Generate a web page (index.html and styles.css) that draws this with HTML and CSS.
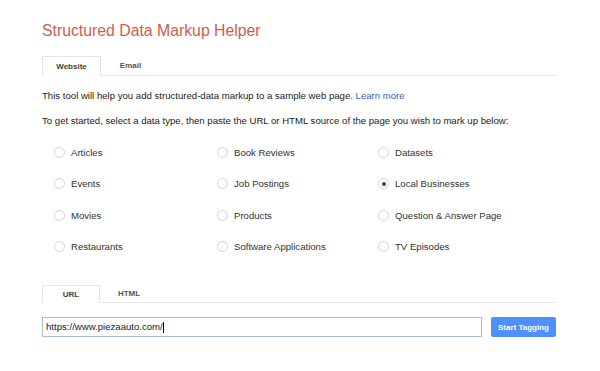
FILE: index.html
```html
<!DOCTYPE html>
<html lang="en">
<head>
    <meta charset="UTF-8">
    <title>Structured Data Markup Helper</title>
    <link rel="stylesheet" href="styles.css">
</head>
<body>
    <div class="helper">
        <h1>Structured Data Markup Helper</h1>

        <div class="tabs">
            <span class="tab active">Website</span>
            <span class="tab">Email</span>
        </div>

        <p class="intro">This tool will help you add structured-data markup to a sample web page. <a href="#">Learn more</a></p>
        <p class="intro">To get started, select a data type, then paste the URL or HTML source of the page you wish to mark up below:</p>

        <div class="types">
            <label class="type"><span class="radio"></span>Articles</label>
            <label class="type"><span class="radio"></span>Book Reviews</label>
            <label class="type"><span class="radio"></span>Datasets</label>
            <label class="type"><span class="radio"></span>Events</label>
            <label class="type"><span class="radio"></span>Job Postings</label>
            <label class="type"><span class="radio checked"></span>Local Businesses</label>
            <label class="type"><span class="radio"></span>Movies</label>
            <label class="type"><span class="radio"></span>Products</label>
            <label class="type"><span class="radio"></span>Question &amp; Answer Page</label>
            <label class="type"><span class="radio"></span>Restaurants</label>
            <label class="type"><span class="radio"></span>Software Applications</label>
            <label class="type"><span class="radio"></span>TV Episodes</label>
        </div>

        <div class="tabs source-tabs">
            <span class="tab active">URL</span>
            <span class="tab">HTML</span>
        </div>

        <div class="url-row">
            <div class="url-input">https://www.piezaauto.com/<span class="caret"></span></div>
            <button class="start-btn">Start Tagging</button>
        </div>
    </div>
</body>
</html>
```

FILE: styles.css
```css
* {
    margin: 0;
    padding: 0;
    box-sizing: border-box;
}

body {
    font-family: "Liberation Sans", Arial, sans-serif;
    background: #ffffff;
    color: #222;
}

.helper {
    width: 514px;
    margin-left: 42px;
    padding-top: 22px;
}

.helper h1 {
    font-size: 15.8px;
    font-weight: normal;
    color: #d65a4a;
    line-height: 18px;
}

.tabs {
    display: flex;
    border-bottom: 1px solid #e5e5e5;
    margin-top: 16px;
    height: 20px;
}

.tab {
    font-size: 8px;
    font-weight: bold;
    color: #555;
    width: 59px;
    text-align: center;
    line-height: 19px;
}

.tab.active {
    border: 1px solid #e5e5e5;
    border-bottom: 1px solid #fff;
    height: 20px;
    color: #444;
}

.intro {
    font-size: 9.6px;
    line-height: 12px;
    color: #222;
    margin-top: 14px;
}

.intro + .intro {
    margin-top: 13px;
}

.intro a {
    color: #3b5fc0;
    text-decoration: none;
}

.types {
    display: grid;
    grid-template-columns: 163px 161px 1fr;
    grid-auto-rows: 31.3px;
    margin-top: 10px;
    padding-left: 12px;
}

.type {
    display: flex;
    align-items: center;
    font-size: 9.6px;
    color: #333;
}

.radio {
    width: 11px;
    height: 11px;
    border: 1px solid #d4d4d4;
    border-radius: 50%;
    margin-right: 6px;
    display: flex;
    align-items: center;
    justify-content: center;
}

.radio.checked::after {
    content: "";
    width: 4px;
    height: 4px;
    border-radius: 50%;
    background: #444;
}

.source-tabs {
    margin-top: 23px;
    height: 18px;
}

.source-tabs .tab {
    line-height: 17px;
    width: 58px;
}

.source-tabs .tab.active {
    height: 18px;
}

.url-row {
    display: flex;
    margin-top: 14px;
    gap: 9px;
}

.url-input {
    width: 440px;
    height: 20px;
    border: 1px solid #a9bbd6;
    font-size: 9.6px;
    line-height: 18px;
    padding-left: 3px;
    color: #222;
    display: flex;
    align-items: center;
}

.caret {
    width: 1px;
    height: 11px;
    background: #000;
}

.start-btn {
    width: 65px;
    height: 20px;
    border: none;
    border-radius: 2px;
    background: #4d90fe;
    color: #fff;
    font-family: inherit;
    font-size: 8px;
    font-weight: bold;
}
```
